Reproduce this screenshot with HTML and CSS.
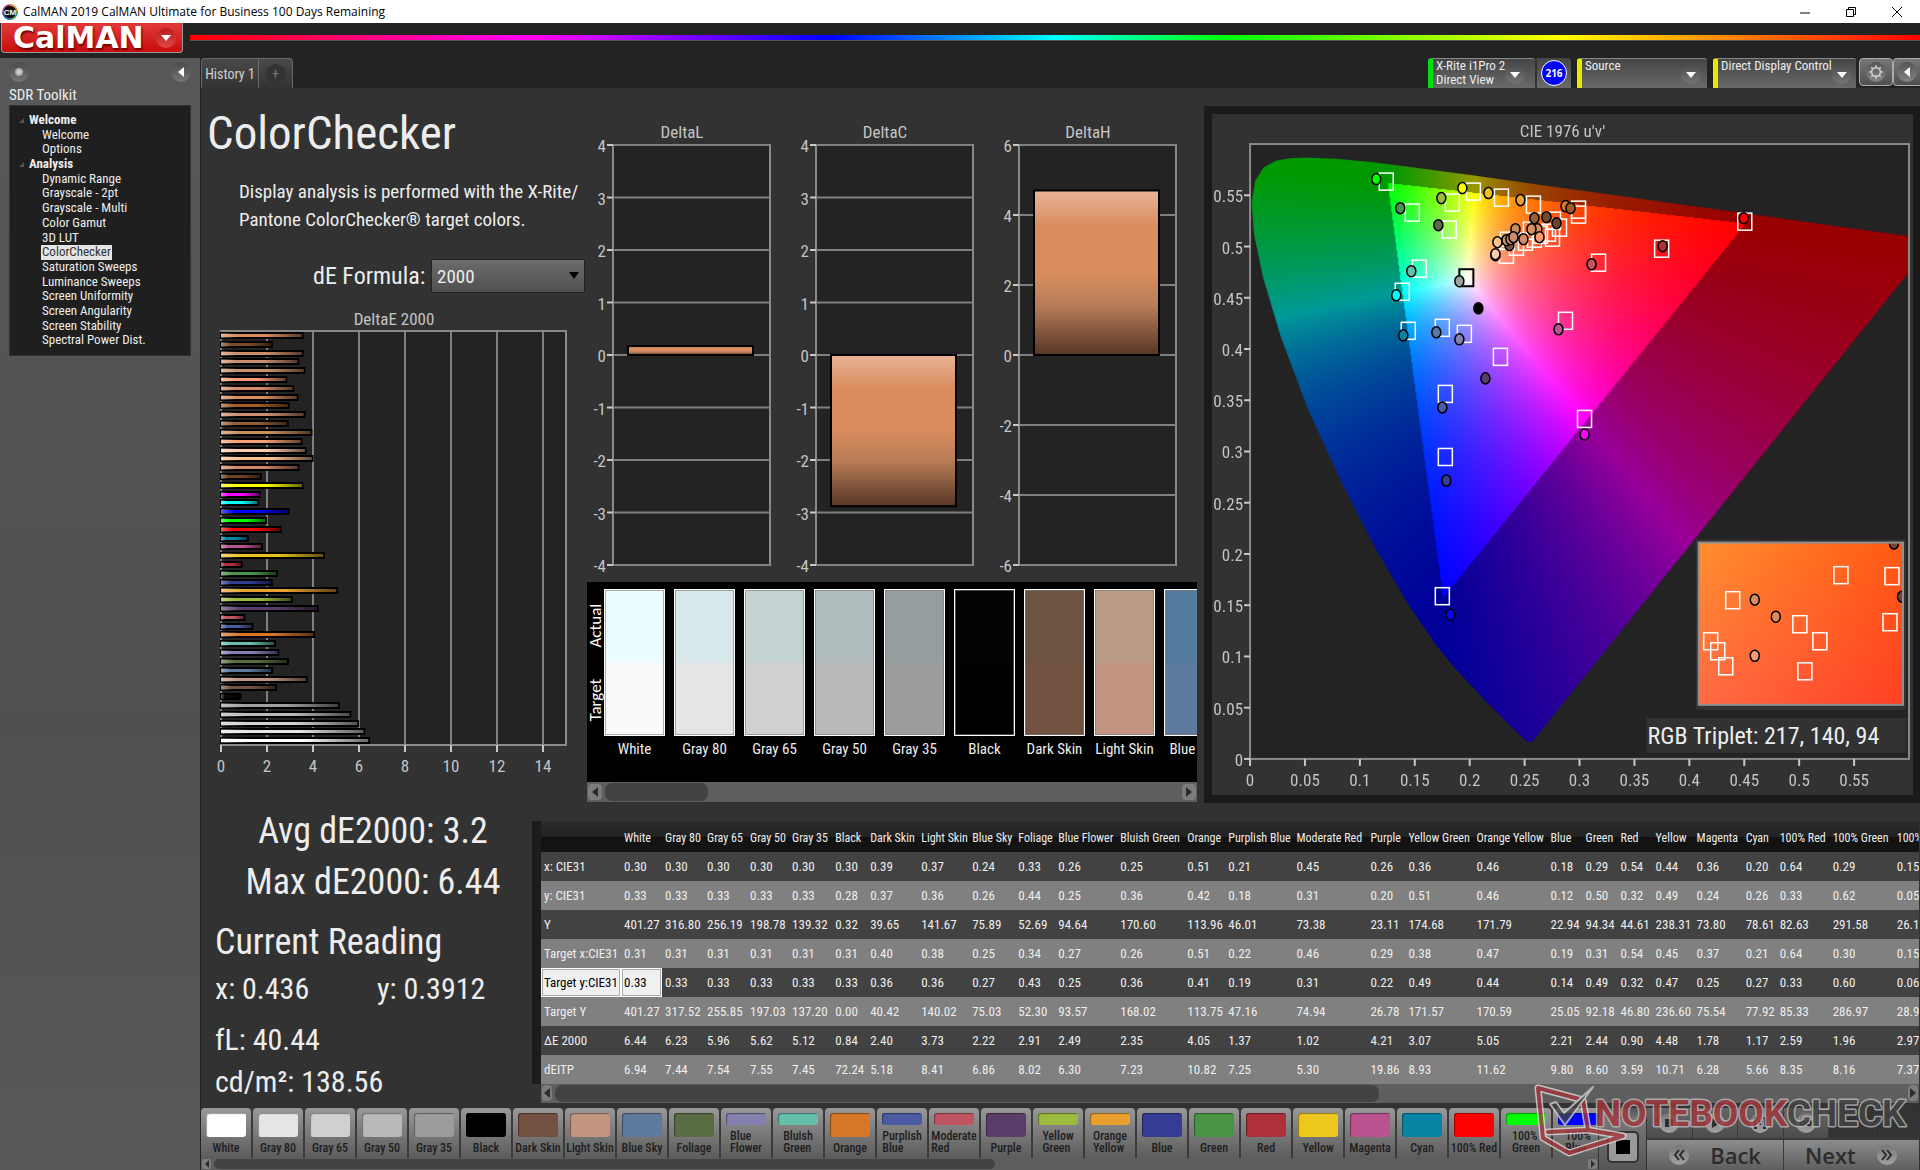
FILE: index.html
```html
<!DOCTYPE html>
<html lang="en">
<head>
<meta charset="utf-8">
<title>CalMAN 2019 CalMAN Ultimate for Business 100 Days Remaining</title>
<link rel="stylesheet" href="styles.css">
</head>
<body>
<header class="titlebar">
  <svg class="app-icon" viewBox="0 0 16 16" aria-hidden="true"><circle cx="8" cy="8" r="7" fill="#111" stroke="#a03c8c" stroke-width="1.5"/><path d="M8 1a7 7 0 0 1 7 7" fill="none" stroke="#d8a020" stroke-width="1.5"/><path d="M15 8a7 7 0 0 1-7 7" fill="none" stroke="#28a050" stroke-width="1.5"/><path d="M8 15a7 7 0 0 1-7-7" fill="none" stroke="#2060c8" stroke-width="1.5"/><text x="8" y="11" text-anchor="middle" font-size="8" font-weight="700" fill="#fff">CM</text></svg>
  <span class="titlebar-text">CalMAN 2019 CalMAN Ultimate for Business 100 Days Remaining</span>
  <button class="win" aria-label="Minimize"><svg viewBox="0 0 12 12"><path d="M1 7h10"/></svg></button>
  <button class="win" aria-label="Restore"><svg viewBox="0 0 12 12"><path d="M1.500 3.500h7v7h-7zM3.500 3.500v-2h7v7h-2"/></svg></button>
  <button class="win" aria-label="Close"><svg viewBox="0 0 12 12"><path d="M1 1l10 10M11 1L1 11"/></svg></button>
</header>

<div class="brandbar">
  <button class="brand"><span>CalMAN</span><i class="round red"><b class="down"></b></i></button>
  <div class="rainbow"></div>
</div>

<div class="app">
  <aside class="sidebar">
    <div class="side-top"><i class="round"><b class="led"></b></i><button class="round" aria-label="Collapse"><b class="left"></b></button></div>
    <h2>SDR Toolkit</h2>
    <nav class="tree">
      <strong>Welcome</strong><a href="#">Welcome</a><a href="#">Options</a>
      <strong>Analysis</strong><a href="#">Dynamic Range</a><a href="#">Grayscale - 2pt</a><a href="#">Grayscale - Multi</a><a href="#">Color Gamut</a><a href="#">3D LUT</a><a href="#" class="on">ColorChecker</a><a href="#">Saturation Sweeps</a><a href="#">Luminance Sweeps</a><a href="#">Screen Uniformity</a><a href="#">Screen Angularity</a><a href="#">Screen Stability</a><a href="#">Spectral Power Dist.</a>
    </nav>
  </aside>

  <div class="work">
    <div class="tabs">
      <button class="tab">History 1</button><button class="tab add" aria-label="Add tab"><i class="round dark">+</i></button>
      <div class="devices">
        <button class="device green"><span>X-Rite i1Pro 2<br>Direct View</span><i class="round"><b class="down"></b></i></button><button class="badge-cell"><span>216</span></button>
        <button class="device yellow source"><span>Source</span><i class="round"><b class="down"></b></i></button>
        <button class="device yellow direct"><span>Direct Display Control</span><i class="round"><b class="down"></b></i></button>
        <button class="tool" aria-label="Settings"><i class="round lit"><svg viewBox="0 0 20 20"><circle cx="10" cy="10" r="5.500" fill="none" stroke="#ccc" stroke-width="2"/><path d="M10 1.500v3M10 15.500v3M1.500 10h3M15.500 10h3M4 4l2 2M14 14l2 2M4 16l2-2M14 6l2-2" stroke="#ccc" stroke-width="2"/></svg></i></button><button class="tool" aria-label="Back"><i class="round lit"><b class="left"></b></i></button>
      </div>
    </div>

    <main>
      <div class="upper">
        <section class="intro">
          <h1>ColorChecker</h1>
          <p>Display analysis is performed with the X-Rite/<br>Pantone ColorChecker® target colors.</p>
          <div class="formula"><label for="formula">dE Formula:</label><div class="select-wrap"><select id="formula"><option>2000</option></select><b class="down"></b></div></div>
          <svg class="chart" id="de-chart" viewBox="0 0 379 470" role="img" aria-label="DeltaE 2000"></svg>
        </section>
        <section class="middle">
          <svg class="chart" id="delta-charts" viewBox="0 0 610 460" role="img" aria-label="DeltaL, DeltaC, DeltaH"></svg>
          <div class="compare">
            <div class="compare-body"><div class="compare-axis"><span>Actual</span><span>Target</span></div><div class="compare-list" id="compare"></div></div>
            <div class="scroll wide"><button aria-label="Scroll left"><b class="left"></b></button><div class="track"><div class="thumb short"></div></div><button aria-label="Scroll right"><b class="right"></b></button></div>
          </div>
        </section>
        <section class="cie">
          <div class="cie-plot">
            <canvas id="gamut" width="658" height="614"></canvas>
            <svg class="chart" id="cie-chart" viewBox="0 0 700 680" role="img" aria-label="CIE 1976 u'v'"></svg>
          </div>
        </section>
      </div>

      <div class="lower">
        <section class="stats">
          <div class="big">Avg dE2000: 3.2</div>
          <div class="big">Max dE2000: 6.44</div>
          <h2>Current Reading</h2>
          <div class="pair"><span>x: 0.436</span><span>y: 0.3912</span></div>
          <div class="fl">fL: 40.44</div>
          <div class="cd">cd/m²: 138.56</div>
        </section>
        <section class="data">
          <div class="table-clip"><table id="table"></table></div>
          <div class="scroll table-scroll"><button aria-label="Scroll left"><b class="left"></b></button><div class="track"><div class="thumb long"></div></div><button aria-label="Scroll right"><b class="right"></b></button></div>
        </section>
      </div>
    </main>

    <footer>
      <div class="patches">
        <div class="patch-list" id="patches"></div>
        <div class="scroll thin"><button aria-label="Scroll left"><b class="left"></b></button><div class="track"><div class="thumb mid"></div></div><button aria-label="Scroll right"><b class="right"></b></button></div>
      </div>
      <div class="stop-box"><b class="up"></b><button class="stop" aria-label="Stop"><i></i></button></div>
      <div class="controls">
        <div class="media">
          <button aria-label="Halt"><i class="round lit"><svg viewBox="0 0 12 12"><path class="solid" d="M2 2h8v8H2z"/></svg></i></button><button aria-label="Play"><i class="round lit"><svg viewBox="0 0 12 12"><path class="solid" d="M3 1l8 5-8 5z"/></svg></i></button><button aria-label="Range"><i class="round lit"><svg viewBox="0 0 12 12"><path d="M3 1H1v10h2M9 1h2v10H9M6 3v5"/></svg></i></button><button aria-label="Loop"><i class="round lit"><svg viewBox="0 0 12 12"><path d="M6 6C4 3 1 3 1 6s3 3 5 0 5-3 5 0-3 3-5 0"/></svg></i></button><button class="off" aria-label="Refresh"><i class="round dark"><svg viewBox="0 0 12 12"><path d="M10 6a4 4 0 1 1-2-3.500M8 0v3H5"/></svg></i></button><button class="off" aria-label="Record"><i class="round dark"></i></button>
        </div>
        <div class="steps">
          <button><i class="round lit"><svg viewBox="0 0 12 12"><path d="M6 1L2 6l4 5M11 1L7 6l4 5"/></svg></i><span>Back</span></button><button><span>Next</span><i class="round lit"><svg viewBox="0 0 12 12"><path d="M1 1l4 5-4 5M6 1l4 5-4 5"/></svg></i></button>
        </div>
      </div>
      <svg class="watermark" viewBox="0 0 380 80" aria-label="Notebookcheck">
        <g fill="none" stroke-linejoin="round" stroke-linecap="round">
          <path d="M4 8L49 20L54 50L89 56L35 73L9 58ZM54 50L14 52" stroke="#ddd" stroke-width="7"/>
          <path d="M4 8L49 20L54 50L89 56L35 73L9 58ZM54 50L14 52" stroke="#a5363c" stroke-width="4"/>
          <path d="M16 24L22 22L30 33L59 7L31 45Z" fill="#444" stroke="#ccc" stroke-width="2"/>
        </g>
        <text x="61" y="46"><tspan fill="#a5363c">NOTEBOOK</tspan><tspan fill="#444">CHECK</tspan></text>
      </svg>
    </footer>
  </div>
</div>
<script src="app.js"></script>
</body>
</html>
```
FILE: styles.css
```css
* { box-sizing: border-box; }
body { margin: 0; min-height: 100vh; display: flex; flex-direction: column; background: #232323; color: #ededed; font-family: "Roboto Condensed", Carlito, "Liberation Sans", sans-serif; font-size: 14px; overflow-x: hidden; }
button { font: inherit; color: inherit; border: 0; padding: 0; background: none; }
h1, h2, p { margin: 0; font-weight: 400; }
i { font-style: normal; }

/* arrows and round button faces */
.down, .up, .left, .right { display: block; width: 0; height: 0; border: 5px solid transparent; }
.down { border-top: 6px solid #fff; border-bottom: 0; }
.up { border-bottom: 6px solid #555; border-top: 0; }
.left { border-right: 6px solid #fff; border-left: 0; }
.right { border-left: 6px solid #fff; border-right: 0; }
.round { display: flex; align-items: center; justify-content: center; flex: none; width: 20px; height: 20px; border-radius: 50%; background: linear-gradient(#4a4a4a, #757575); }
.round.red { background: linear-gradient(#b81c1c, #e04848); }
.round.dark { background: #333; color: #777; }
.round.lit { background: linear-gradient(#777, #a2a2a2); color: #333; }
.led { width: 8px; height: 8px; border-radius: 50%; background: radial-gradient(#ddd, #888); }

.titlebar { display: flex; align-items: center; height: 23px; background: #fff; color: #000; padding-left: 2px; font: 12px "Open Sans", sans-serif; }
.app-icon { width: 16px; height: 16px; margin-right: 5px; font-family: "Liberation Sans", sans-serif; }
.titlebar-text { flex: 1; }
.win { width: 46px; height: 20px; }
.win svg { width: 12px; height: 12px; display: block; margin: auto; fill: none; stroke: #000; }

.brandbar { display: flex; align-items: flex-start; gap: 7px; height: 35px; }
.brand { display: flex; align-items: center; justify-content: space-between; width: 182px; height: 30px; margin-left: 1px; padding: 0 6px 0 11px; border: 1px solid #999; border-top: 0; border-radius: 0 0 4px 4px; background: linear-gradient(#e33a3a, #c80c0c); color: #fff; font: 700 30px/30px "DejaVu Sans", sans-serif; text-shadow: 1px 2px 2px #600; }
.rainbow { flex: 1; height: 6px; margin-top: 12px; background: linear-gradient(90deg, #f00 0, #f0f 20%, #00f 37%, #0ff 50%, #0f0 60%, #ff0 79%, #f00 100%); border-bottom: 1px solid #555; }

.app { display: flex; flex: 1; }
.sidebar { width: 200px; flex: none; background: linear-gradient(#585858, #505050 60%, #585858); padding: 4px 9px; }
.side-top { display: flex; justify-content: space-between; }
.sidebar h2 { font-size: 15px; line-height: 20px; margin-top: 3px; }
.tree { display: grid; grid-auto-rows: 1fr; height: 251px; padding: 7px 0 7px 19px; background: #1f1f1f; border: 1px solid #333; font-size: 13px; line-height: 14px; }
.tree strong { position: relative; }
.tree strong::before { content: ""; position: absolute; left: -10px; top: 5px; border-left: 5px solid transparent; border-bottom: 5px solid #555; }
.tree a { justify-self: start; margin-left: 12px; padding: 0 1px; color: #ededed; text-decoration: none; }
.tree a.on { background: #e6e6e6; color: #333; }

.work { flex: 1; min-width: 0; display: flex; flex-direction: column; border-left: 1px solid #232323; background: #323232; }
.tabs { display: flex; height: 30px; background: #232323; }
.tab { width: 58px; font-size: 14px; color: #d0d0d0; background: linear-gradient(#4a4a4a, #333); border: 1px solid #6a6a6a; border-bottom: 0; border-radius: 4px 0 0 0; }
.tab.add { width: 34px; border-left: 0; border-radius: 0 4px 0 0; display: flex; align-items: center; justify-content: center; }
.devices { margin-left: auto; display: flex; }
.device { display: flex; align-items: center; justify-content: space-between; text-align: left; font-size: 13px; line-height: 14px; padding: 0 6px 0 3px; border-top: 1px solid #888; border-left: 5px solid #00e010; border-radius: 3px 3px 0 0; background: linear-gradient(#454545, #6a6a6a); width: 107px; }
.device.green { padding-right: 10px; }
.device > span { align-self: flex-start; white-space: nowrap; }
.device.yellow { border-left-color: #e8e800; }
.device.source { width: 130px; margin-right: 6px; }
.device.direct { width: 143px; margin-right: 3px; }
.device .round .down { margin-top: 2px; }
.badge-cell { width: 36px; margin-right: 6px; display: flex; align-items: center; justify-content: center; background: linear-gradient(#454545, #6a6a6a); border-left: 2px solid #333; border-radius: 0 3px 0 0; }
.badge-cell span { width: 26px; height: 26px; border-radius: 50%; border: 1px solid #fff; background: #00f; color: #fff; font: 700 10px/24px "Open Sans", sans-serif; text-align: center; }
.tool { width: 34px; height: 28px; display: flex; align-items: center; justify-content: center; border: 1px solid #aaa; border-radius: 4px; background: linear-gradient(#777, #505050); }
.tool .round { background: linear-gradient(#555, #858585); }
.tool:last-child { width: 27px; border-right: 0; border-radius: 4px 0 0 4px; }
.tool svg { width: 16px; height: 16px; }

main { flex: 1; }
.chart { display: block; width: 100%; height: auto; }
.upper { display: grid; grid-template-columns: 379fr 610fr 716fr; column-gap: 7px; }
.upper > section { min-width: 0; }
.intro h1 { font-size: 47px; line-height: 56px; padding: 17px 0 0 6px; }
.intro p { font-size: 19px; line-height: 28px; padding: 17px 0 0 38px; white-space: nowrap; }
.formula { display: flex; align-items: center; gap: 7px; height: 34px; margin: 25px 0 13px; padding-left: 112px; }
.formula label { font-size: 24px; width: 111px; white-space: nowrap; }
.select-wrap { position: relative; }
.select-wrap select { appearance: none; width: 154px; height: 34px; padding: 0 5px; border: 1px solid #222; background: linear-gradient(#6c6c6c, #505050); color: #ededed; font: 19px "Roboto Condensed", sans-serif; }
.select-wrap .down { position: absolute; right: 6px; top: 13px; border-top: 7px solid #000; pointer-events: none; }
.middle { padding-top: 34px; }
.axis { fill: #c4c4c4; font-size: 17px; }
.plot { fill: #232323; stroke: #8a8a8a; stroke-width: 2; }
.grid { stroke: #808080; stroke-width: 2; }
.tick { stroke: #c8c8c8; stroke-width: 2; }

.compare { background: #000; }
.compare-body { display: flex; height: 200px; padding-top: 7px; }
.compare-axis { width: 17px; flex: none; height: 147px; display: flex; flex-direction: column; }
.compare-axis span { flex: 1; writing-mode: vertical-rl; transform: rotate(180deg); text-align: center; font: 17px/17px Carlito, "Open Sans", sans-serif; color: #fff; }
.compare-list { display: flex; gap: 9px; overflow: hidden; }
.compare-list figure { margin: 0; width: 61px; flex: none; text-align: center; font-size: 15px; line-height: 26px; white-space: nowrap; }
.pairing { height: 147px; border: 1px solid #fff; outline: 1px solid rgba(120,120,120,.6); outline-offset: -2px; display: grid; grid-template-rows: 1fr 1fr; }

.scroll { display: flex; align-items: center; background: #5e5e5e; }
.scroll button { display: flex; align-items: center; justify-content: center; width: 14px; height: 16px; margin: 0 1px; border-radius: 4px; background: #7c7c7c; }
.scroll .left { border-right-color: #2c2c2c; }
.scroll .right { border-left-color: #2c2c2c; }
.track { flex: 1; height: 100%; padding: 1px 2px; }
.thumb { height: 100%; border-radius: 7px; background: #434343; }
.wide { height: 20px; }
.thumb.short { width: 18%; }
.table-scroll { height: 19px; margin-left: 9px; }
.table-scroll button { width: 10px; }
.thumb.long { width: 61%; }
.thin { height: 12px; }
.thin button { width: 9px; height: 10px; border-radius: 2px; }
.thin .left, .thin .right { border-width: 4px; }
.thin .left { border-left: 0; }
.thin .right { border-right: 0; }
.thumb.mid { width: 57%; }

.cie { margin-top: 18px; border: 8px solid #1a1a1a; border-right-width: 7px; background: #323232; align-self: start; }
.cie-plot { position: relative; }
.cie-plot canvas { position: absolute; left: 5.430%; top: 4.410%; width: 94%; height: 90.290%; }
.cie-plot .chart { position: relative; }
.cie .plot { fill: none; }

.lower { display: flex; }
.stats { width: 331px; flex: none; padding: 3px 0 0 14px; white-space: nowrap; }
.big { font-size: 36px; line-height: 51px; margin-left: -14px; padding-left: 13px; text-align: center; }
.stats h2 { font-size: 36px; line-height: 50px; margin-top: 9px; }
.pair { display: flex; font-size: 30px; line-height: 44px; }
.pair span:first-child { width: 162px; }
.fl, .cd { font-size: 30px; line-height: 42px; }
.fl { margin-top: 8px; }
.data { flex: 1; min-width: 0; padding: 18px 1px 0 0; }
.table-clip { overflow: hidden; border-left: 9px solid #1c1c1c; }
table { table-layout: fixed; border-collapse: collapse; width: 1420px; font-size: 13px; }
th, td { height: 29px; padding: 0 0 0 3px; text-align: left; font-weight: 400; white-space: nowrap; color: #eee; }
thead tr { background: linear-gradient(#2c2c2c 0, #222 50%, #111 51%, #151515 100%); }
thead th { height: 31px; font-size: 12px; padding-top: 3px; }
tbody tr { background: #424242; }
tbody tr:nth-child(even) { background: #808080; }
tbody .picked { background: #f0f0f0; color: #000; box-shadow: inset 0 0 0 1px #fff, inset 0 0 0 2px #aaa; }

footer { position: relative; display: flex; height: 62px; background: #3a3a3a; margin-right: 1px; }
.patches { flex: 1; min-width: 0; }
.patch-list { display: flex; gap: 2px; overflow: hidden; height: 50px; }
.patch { flex: none; width: 50px; height: 50px; display: flex; flex-direction: column; align-items: center; padding-top: 5px; border-radius: 4px 4px 0 0; background: linear-gradient(#989898, #5c5c5c); color: #202020; font-size: 12px; line-height: 12px; font-weight: 500; text-align: left; }
.patch i { width: 40px; height: 24px; border-radius: 3px; margin-bottom: 5px; box-shadow: inset 1px 1px 1px rgba(0,0,0,.4); }
.patch.two i { height: 12px; }
.patch span { white-space: nowrap; }
.stop-box { width: 49px; display: flex; flex-direction: column; align-items: center; gap: 12px; padding-top: 5px; background: linear-gradient(#555, #777 20%, #555); border-left: 1px solid #333; border-right: 1px solid #333; }
.stop { width: 32px; height: 32px; display: grid; place-items: center; border: 2px solid #333; border-radius: 5px; background: #999; }
.stop i { width: 14px; height: 14px; background: #000; }
.controls { width: 272px; display: flex; flex-direction: column; gap: 2px; }
.media, .steps { display: flex; gap: 1px; flex: 1; }
.media button, .steps button { flex: 1; display: flex; align-items: center; justify-content: center; background: linear-gradient(#666, #4c4c4c); }
.media button.off { background: #333; }
.controls svg { width: 12px; height: 12px; fill: none; stroke: #2c2c2c; stroke-width: 2; }
.controls .solid { fill: #2c2c2c; stroke: none; }
.steps button { justify-content: space-evenly; background: linear-gradient(#8c8c8c, #5e5e5e); color: #2c2c2c; font: 600 22px "Open Sans", sans-serif; }
.watermark { position: absolute; right: 5px; bottom: 10px; width: 380px; height: 80px; opacity: .8; pointer-events: none; }
.watermark text { font: 700 37px Roboto, sans-serif; stroke: #bbb; stroke-width: 3px; paint-order: stroke; stroke-linejoin: round; }
```
FILE: app.js
```js
const byId = id => document.getElementById(id);
const line = (c, a, b, x, y) => `<line class="${c}" x1="${a}" y1="${b}" x2="${x}" y2="${y}"/>`;
const label = (x, y, t, anchor) => `<text class="axis" x="${x}" y="${y}" text-anchor="${anchor || 'middle'}">${t}</text>`;

/* DeltaE 2000 bars: value and colour, top to bottom */
const bars = [[3.55,'#d88b5c'],[2.21,'#7a4a26'],[3.55,'#cd8e6a'],[3.36,'#c98e6e'],[3.63,'#c9946a'],[2.84,'#ff9b72'],[3.14,'#d58c6a'],[3.33,'#d98b5e'],[2.94,'#a35a24'],[3.63,'#cc8f70'],[2.9,'#915e38'],[3.93,'#c68e5c'],[3.5,'#f4a074'],[3.68,'#fccbb0'],[3.98,'#fdc190'],[3.37,'#d08868'],[1.73,'#6e4024'],[3.55,'#ff0'],[1.68,'#f0f'],[1.62,'#0ff'],[2.94,'#00f'],[1.96,'#0f0'],[2.59,'#f00'],[1.17,'#0885a5'],[1.78,'#b9528f'],[4.48,'#ecc21f'],[.9,'#ad303a'],[2.44,'#4a9446'],[2.21,'#353c94'],[5.05,'#e8a02f'],[3.07,'#9dba40'],[4.21,'#5c3d6a'],[1.02,'#c15461'],[1.37,'#4a5ba2'],[4.05,'#d87728'],[2.35,'#65bfaa'],[2.49,'#8480b0'],[2.91,'#5a6c43'],[2.22,'#5a7a9e'],[3.73,'#c29582'],[2.4,'#735244'],[.84,'#080808'],[5.12,'#a0a0a0'],[5.62,'#bababa'],[5.96,'#d0d0d0'],[6.23,'#e6e6e6'],[6.44,'#fff']];
(() => {
  const x0 = 20, y0 = 25, w = 345, h = 414, step = h / bars.length;
  let s = label(193, 19, 'DeltaE 2000') + `<defs><linearGradient id="shade"><stop offset="0" stop-color="#fff" stop-opacity=".35"/><stop offset=".2" stop-color="#fff" stop-opacity="0"/><stop offset=".55" stop-opacity="0"/><stop offset="1" stop-opacity=".6"/></linearGradient></defs><rect class="plot" x="${x0}" y="${y0}" width="${w}" height="${h}"/>`;
  for (let v = 0; v < 15; v += 2) {
    const x = x0 + v * 23;
    s += line('grid', x, y0, x, y0 + h) + line('tick', x, y0 + h, x, y0 + h + 7) + label(x, y0 + h + 27, v);
  }
  bars.forEach(([v, c], i) => {
    const y = Math.round(y0 + 1 + i * step), a = `x="${x0}" y="${y + 1}" width="${v * 23}" height="5"`;
    s += `<rect ${a} fill="${c}" stroke="#000" stroke-width="2"/><rect x="${x0}" y="${y + 2}" width="${v * 23 - 1}" height="3" fill="${c}"/><rect ${a} fill="url(#shade)"/>`;
  });
  byId('de-chart').innerHTML = s;
})();

(() => {
  let s = '<defs><linearGradient id="copper" x2="0" y2="1"><stop offset="0" stop-color="#e8b497"/><stop offset=".22" stop-color="#d98c5e"/><stop offset=".5" stop-color="#d98c5e"/><stop offset=".7" stop-color="#b87c57"/><stop offset="1" stop-color="#563625"/></linearGradient></defs>';
  [['DeltaL', 4, 1, .17], ['DeltaC', 4, 1, -2.88], ['DeltaH', 6, 2, 4.7]].forEach(([name, max, step, v], i) => {
    const x = 26 + i * 203, y0 = 23, h = 420, at = n => y0 + h / 2 - n * h / 2 / max;
    s += label(x + 69, 16, name) + `<rect class="plot" x="${x}" y="${y0}" width="157" height="${h}"/>`;
    for (let n = max; n >= -max; n -= step)
      s += line('grid', x, at(n), x + 157, at(n)) + line('tick', x - 6, at(n), x, at(n)) + label(x - 7, at(n) + 7, n, 'end');
    s += `<rect x="${x + 15}" y="${Math.min(at(0), at(v))}" width="125" height="${Math.abs(at(v) - at(0))}" fill="url(#copper)" stroke="#000" stroke-width="2"/>`;
  });
  byId('delta-charts').innerHTML = s;
})();

/* CIE 1976 u'v' diagram */
const W = 658, H = 614;
(() => {
  const xy = [[.1741,.005],[.1714,.0051],[.1644,.0109],[.1566,.0177],[.144,.0297],[.1355,.0399],[.1241,.0578],[.1096,.0868],[.0913,.1327],[.0687,.2007],[.0454,.295],[.0235,.4127],[.0082,.5384],[.0039,.6548],[.0139,.7502],[.0389,.812],[.0743,.8338],[.1142,.8262],[.1547,.8059],[.2296,.7543],[.3016,.6923],[.3731,.6245],[.4441,.5547],[.5125,.4866],[.5752,.4242],[.627,.3725],[.6658,.334],[.6915,.3083],[.719,.2809],[.7347,.2653]];
  const ctx = byId('gamut').getContext('2d');
  ctx.fillStyle = '#232323';
  ctx.fillRect(0, 0, W, H);
  const off = document.createElement('canvas');
  off.width = W; off.height = H;
  const o = off.getContext('2d'), img = o.createImageData(W, H);
  for (let j = 0; j < H; j++) for (let i = 0; i < W; i++) {
    const u = i / W * .6, v = (H - j) / H * .6 || .001, d = 6 * u - 16 * v + 12;
    const x = 9 * u / d, y = 4 * v / d, X = x / y, Z = (1 - x - y) / y;
    const rgb = [3.2406 * X - 1.5372 - .4986 * Z, -.9689 * X + 1.8758 + .0415 * Z, .0557 * X - .204 + 1.057 * Z];
    const k = (Math.min(...rgb) < 0 ? 153 : 255) / Math.max(...rgb), p = (j * W + i) * 4;
    rgb.forEach((c, n) => { img.data[p + n] = Math.max(0, c * k); });
    img.data[p + 3] = 255;
  }
  o.putImageData(img, 0, 0);
  ctx.beginPath();
  xy.forEach(([x, y]) => {
    const d = -2 * x + 12 * y + 3;
    ctx.lineTo(4 * x / d / .6 * W, H - 9 * y / d / .6 * H);
  });
  ctx.closePath();
  ctx.clip();
  ctx.drawImage(off, 0, 0);
})();
(() => {
  const x0 = 38, y0 = 30;
  const box = (x, y, c) => `<rect x="${x - 7}" y="${y - 8}" width="14" height="17" fill="none" stroke="${c || '#fff'}" stroke-width="${c ? 2 : 1.5}"/>`;
  const dot = (x, y, c) => `<ellipse cx="${x}" cy="${y}" rx="4.500" ry="5.500" fill="${c}" stroke="#000" stroke-width="1.500"/>`;
  let s = label(350, 23, "CIE 1976 u'v'") + `<rect class="plot" x="${x0}" y="${y0}" width="${W}" height="${H}"/>`;
  for (let n = 0; n < 12; n++) {
    const t = String(+(n * .05).toFixed(2)), x = x0 + n * W / 12, y = y0 + H - n * H / 12;
    s += line('tick', x, y0 + H, x, y0 + H + 7) + label(x, y0 + H + 27, t) + line('tick', x0 - 6, y, x0, y) + label(x0 - 7, y + 7, t, 'end');
  }
  s += `<g transform="translate(${x0} ${y0})">`;
  [[136,37],[223,47],[251,53],[202,58],[162,68],[199,85],[283,60],[328,65],[328,70],[309,83],[303,76],[302,93],[169,124],[152,147],[158,186],[192,183],[214,189],[250,212],[195,249],[315,176],[348,118],[411,104],[494,77],[334,274],[195,312],[192,451],[280,86],[257,96],[266,102],[275,97],[284,94],[256,110],[298,88],[290,90]].forEach(p => { s += box(...p); });
  s += box(216, 133, '#000');
  [[126,35,'#0f0'],[212,44,'#ff0'],[238,49,'#ecc21f'],[191,54,'#9dba40'],[270,56,'#e8a02f'],[150,64,'#4a9446'],[315,62,'#d87728'],[320,64,'#a35a24'],[188,81,'#5a6c43'],[161,127,'#65bfaa'],[146,151,'#0ff'],[209,137,'#a0a0a0'],[228,164,'#000'],[153,191,'#0885a5'],[186,188,'#5a7a9e'],[209,195,'#8480b0'],[235,234,'#5c3d6a'],[192,263,'#4a5ba2'],[308,185,'#b9528f'],[341,120,'#c15461'],[412,102,'#ad303a'],[493,74,'#f00'],[196,336,'#353c94'],[334,290,'#f0f'],[200,470,'#00f'],[284,74,'#915e38'],[296,73,'#734a2a'],[306,79,'#6b4429'],[265,85,'#c6905f'],[287,85,'#d78f64'],[281,85,'#d78f64'],[289,93,'#ff9b72'],[273,95,'#d58c6a'],[247,98,'#fdc190'],[259,101,'#735244'],[256,96,'#c9946a'],[260,95,'#c99270'],[263,93,'#cb8d6d'],[245,111,'#dab49a'],[245,110,'#fccbb0']].forEach(p => { s += dot(...p); });
  s += '</g>';
  /* magnified area and RGB readout */
  s += `<defs><linearGradient id="za" x2="1" y2="0"><stop stop-color="#ff8f30"/><stop offset="1" stop-color="#ff5a14"/></linearGradient><linearGradient id="zb" x2="1" y2="0"><stop stop-color="#ff6a45"/><stop offset="1" stop-color="#ff4024"/></linearGradient><linearGradient id="zm" x2="0" y2="1"><stop stop-color="#000"/><stop offset="1" stop-color="#fff"/></linearGradient><mask id="zk" maskContentUnits="objectBoundingBox"><rect width="1" height="1" fill="url(#zm)"/></mask><clipPath id="zc"><rect width="204" height="162"/></clipPath></defs>
  <rect x="483" y="425" width="210" height="170" fill="#323232"/><g transform="translate(486 428)"><rect width="204" height="162" fill="url(#za)"/><rect width="204" height="162" fill="url(#zb)" mask="url(#zk)"/><g clip-path="url(#zc)">`;
  [[142,32],[193,33],[34,57],[101,81],[191,79],[12,98],[19,108],[27,123],[121,98],[106,128]].forEach(p => { s += box(...p); });
  [[56,57,'#d98c5e'],[77,74,'#d98c5e'],[56,113,'#ff9b72'],[195,1,'#734a2a'],[203,54,'#6b4429']].forEach(p => { s += dot(...p); });
  s += '</g><rect width="204" height="162" fill="none" stroke="#909090" stroke-width="2"/></g><rect x="434" y="603" width="259" height="34" fill="#323232"/><text x="435" y="629" fill="#ededed" font-size="24">RGB Triplet: 217, 140, 94</text>';
  byId('cie-chart').innerHTML = s;
})();

byId('compare').innerHTML = [['White','#edfdff','#fafafa'],['Gray 80','#d9e8eb','#e5e5e5'],['Gray 65','#c5d2d2','#d0d0d0'],['Gray 50','#b1bcbe','#b9b9b9'],['Gray 35','#949e9f','#9c9c9c'],['Black','#020204','#000'],['Dark Skin','#6d5341','#735141'],['Light Skin','#ba9b85','#c29581'],['Blue Sky','#557b9f','#5e7a9e']]
  .map(([n, a, t]) => `<figure><div class="pairing"><div style="background:${a}"></div><div style="background:${t}"></div></div><figcaption>${n}</figcaption></figure>`).join('');

const names = ['White','Gray 80','Gray 65','Gray 50','Gray 35','Black','Dark Skin','Light Skin','Blue Sky','Foliage','Blue Flower','Bluish Green','Orange','Purplish Blue','Moderate Red','Purple','Yellow Green','Orange Yellow','Blue','Green','Red','Yellow','Magenta','Cyan','100% Red','100% Green','100% Blue'];
const widths = [80,41,42,43,42,43,35,51,51,46,40,62,67,41,68,74,38,68,74,35,35,35,41,49,34,53,64,67];
const rows = [
  ['x: CIE31','0.30 0.30 0.30 0.30 0.30 0.30 0.39 0.37 0.24 0.33 0.26 0.25 0.51 0.21 0.45 0.26 0.36 0.46 0.18 0.29 0.54 0.44 0.36 0.20 0.64 0.29 0.15'],
  ['y: CIE31','0.33 0.33 0.33 0.33 0.33 0.28 0.37 0.36 0.26 0.44 0.25 0.36 0.42 0.18 0.31 0.20 0.51 0.46 0.12 0.50 0.32 0.49 0.24 0.26 0.33 0.62 0.05'],
  ['Y','401.27 316.80 256.19 198.78 139.32 0.32 39.65 141.67 75.89 52.69 94.64 170.60 113.96 46.01 73.38 23.11 174.68 171.79 22.94 94.34 44.61 238.31 73.80 78.61 82.63 291.58 26.1'],
  ['Target x:CIE31','0.31 0.31 0.31 0.31 0.31 0.31 0.40 0.38 0.25 0.34 0.27 0.26 0.51 0.22 0.46 0.29 0.38 0.47 0.19 0.31 0.54 0.45 0.37 0.21 0.64 0.30 0.15'],
  ['Target y:CIE31','0.33 0.33 0.33 0.33 0.33 0.33 0.36 0.36 0.27 0.43 0.25 0.36 0.41 0.19 0.31 0.22 0.49 0.44 0.14 0.49 0.32 0.47 0.25 0.27 0.33 0.60 0.06'],
  ['Target Y','401.27 317.52 255.85 197.03 137.20 0.00 40.42 140.02 75.03 52.30 93.57 168.02 113.75 47.16 74.94 26.78 171.57 170.59 25.05 92.18 46.80 236.60 75.54 77.92 85.33 286.97 28.9'],
  ['ΔE 2000','6.44 6.23 5.96 5.62 5.12 0.84 2.40 3.73 2.22 2.91 2.49 2.35 4.05 1.37 1.02 4.21 3.07 5.05 2.21 2.44 0.90 4.48 1.78 1.17 2.59 1.96 2.97'],
  ['dEITP','6.94 7.44 7.54 7.55 7.45 72.24 5.18 8.41 6.86 8.02 6.30 7.23 10.82 7.25 5.30 19.86 8.93 11.62 9.80 8.60 3.59 10.71 6.28 5.66 8.35 8.16 7.37']];
byId('table').innerHTML = '<colgroup>' + widths.map(w => `<col style="width:${w}px">`).join('') + '</colgroup><thead><tr><th></th>' + names.map(n => `<th>${n}</th>`).join('') + '</tr></thead><tbody>' +
  rows.map(([n, v], r) => `<tr><th${r === 4 ? ' class="picked"' : ''}>${n}</th>` + v.split(' ').map((t, c) => `<td${r === 4 && c === 0 ? ' class="picked"' : ''}>${t}</td>`).join('') + '</tr>').join('') + '</tbody>';

const patchColors = ['#fff','#e5e5e5','#d0d0d0','#b9b9b9','#9c9c9c','#000','#735141','#c29581','#5e7a9e','#5a6c43','#8480b0','#65bfaa','#d87728','#4a5ba2','#c15461','#5c3d6a','#9dba40','#e8a02f','#353c94','#4a9446','#ad303a','#ecc81f','#b9528f','#0885a5','#f00','#0f0','#00f'];
const stacked = ['Blue Flower','Bluish Green','Purplish Blue','Moderate Red','Yellow Green','Orange Yellow','100% Green','100% Blue'];
byId('patches').innerHTML = names.map((n, i) => {
  const two = stacked.includes(n);
  return `<button class="patch${two ? ' two' : ''}"><i style="background:${patchColors[i]}"></i><span>${two ? n.replace(' ', '<br>') : n}</span></button>`;
}).join('');
```
